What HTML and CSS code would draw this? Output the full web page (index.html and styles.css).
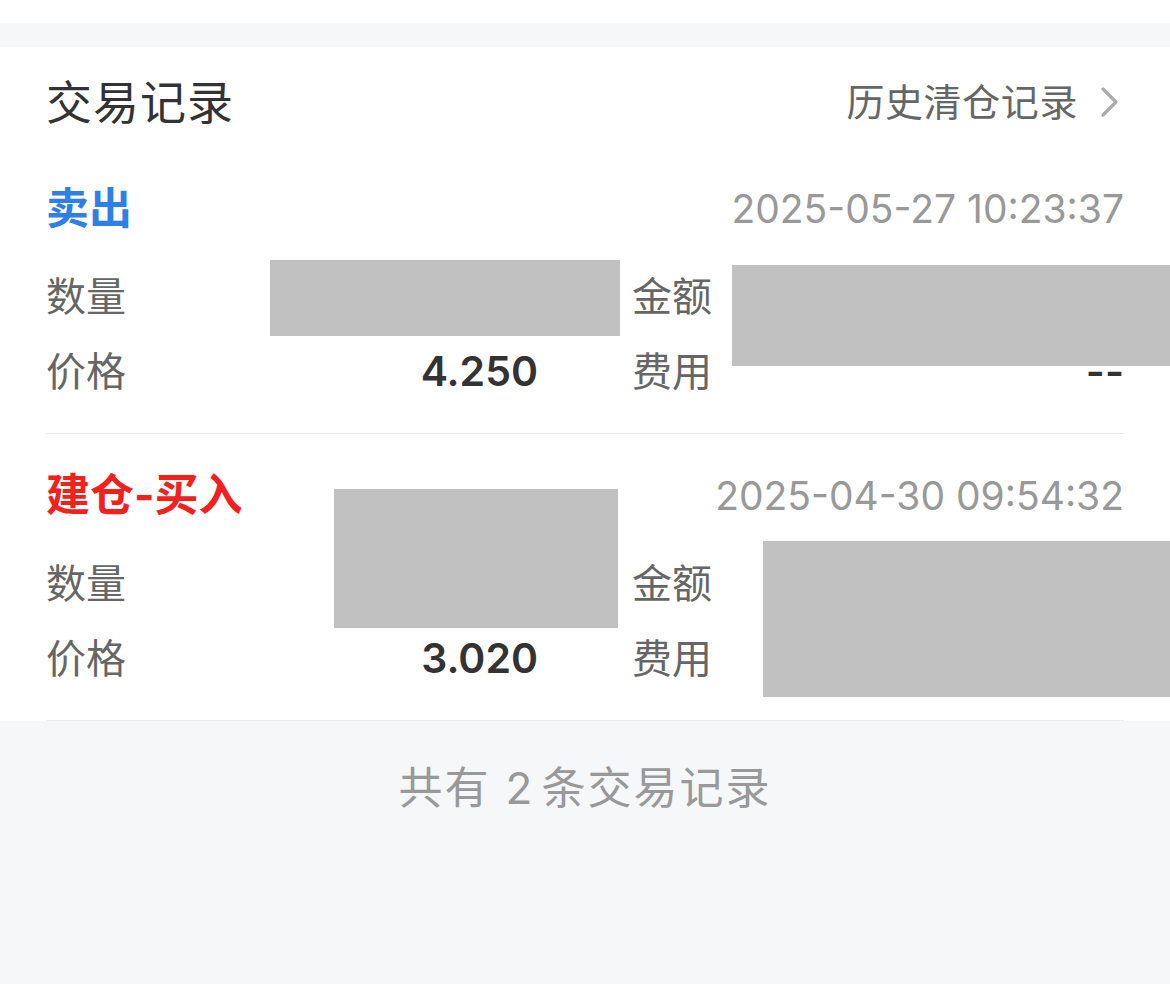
FILE: index.html
```html
<!DOCTYPE html>
<html lang="zh-CN">
<head>
<meta charset="utf-8">
<title>交易记录</title>
<link rel="stylesheet" href="styles.css">
</head>
<body>
<div class="top-white"></div>
<div class="top-gap"></div>
<section class="card">
  <header class="card-head">
    <h1 class="title">交易记录</h1>
    <a class="history">历史清仓记录
      <svg class="chev" width="20" height="32" viewBox="0 0 20 32"><polyline points="3,3 16,16 3,29" fill="none" stroke="#ababab" stroke-width="3.2" stroke-linecap="round" stroke-linejoin="round"/></svg>
    </a>
  </header>

  <div class="record">
    <div class="rec-top">
      <span class="type sell">卖出</span>
      <span class="time">2025-05-27 10:23:37</span>
    </div>
    <div class="grid">
      <div class="cell"><span class="label">数量</span><span class="val"></span></div>
      <div class="cell"><span class="label">金额</span><span class="val"></span></div>
      <div class="cell"><span class="label">价格</span><span class="val">4.250</span></div>
      <div class="cell"><span class="label">费用</span><span class="val">--</span></div>
    </div>
    <div class="mask m1"></div>
    <div class="mask m2"></div>
  </div>

  <div class="record">
    <div class="rec-top">
      <span class="type buy">建仓-买入</span>
      <span class="time">2025-04-30 09:54:32</span>
    </div>
    <div class="grid">
      <div class="cell"><span class="label">数量</span><span class="val"></span></div>
      <div class="cell"><span class="label">金额</span><span class="val"></span></div>
      <div class="cell"><span class="label">价格</span><span class="val">3.020</span></div>
      <div class="cell"><span class="label">费用</span><span class="val"></span></div>
    </div>
    <div class="mask m3"></div>
    <div class="mask m4"></div>
  </div>
</section>
<footer class="foot">共有<span class="num">2</span>条交易记录</footer>
</body>
</html>
```
FILE: styles.css
```css
* { box-sizing: border-box; }
html, body {
  margin: 0;
  padding: 0;
  background: #f6f7f9;
  font-family: "Inter", "Noto Sans CJK SC", sans-serif;
  color: #333;
}
.top-white { height: 23px; background: #fff; }
.top-gap { height: 24px; background: #f6f7f9; }
.card {
  background: #fff;
  padding: 0 46px;
}
.card-head {
  height: 100px;
  padding-top: 10px;
  display: flex;
  align-items: center;
  justify-content: space-between;
}
.title {
  margin: 0;
  font-size: 46px;
  font-weight: 400;
  color: #333;
  line-height: 1;
  letter-spacing: 1px;
}
.history {
  display: flex;
  align-items: center;
  gap: 22px;
  font-size: 38px;
  color: #666;
  line-height: 1;
  margin-right: 4px;
  letter-spacing: 0.6px;
}
.chev { display: block; }
.record {
  position: relative;
  padding: 33px 0 24px;
  border-bottom: 1px solid #ececec;
}
.rec-top {
  height: 56px;
  display: flex;
  align-items: center;
  justify-content: space-between;
}
.type {
  font-size: 44px;
  font-weight: 700;
  line-height: 1;
}
.sell { color: #2f80e6; font-size: 43px; }
.buy { color: #f2211e; }
.time {
  font-size: 39px;
  color: #999;
  line-height: 1;
}
.grid {
  margin-top: 23px;
  display: grid;
  grid-template-columns: 1fr 1fr;
  column-gap: 94px;
  grid-auto-rows: 75px;
}
.cell {
  display: flex;
  align-items: center;
  justify-content: space-between;
}
.label {
  font-size: 40px;
  color: #666;
  line-height: 1;
}
.val {
  font-size: 41px;
  font-weight: 600;
  color: #333;
  line-height: 1;
}
.mask {
  position: absolute;
  background: #c1c1c1;
}
.m1 { left: 224px; top: 113px; width: 350px; height: 76px; }
.m2 { left: 686px; top: 118px; width: 438px; height: 101px; margin-right: -46px; }
.m3 { left: 288px; top: 55px; width: 284px; height: 139px; }
.m4 { left: 717px; top: 107px; width: 407px; height: 156px; margin-right: -46px; }
.foot {
  text-align: center;
  padding-top: 41px;
  font-size: 44px;
  color: #999;
  line-height: 1.2;
  letter-spacing: 2px;
}
.num {
  margin: 0 7px 0 15px;
}
```
